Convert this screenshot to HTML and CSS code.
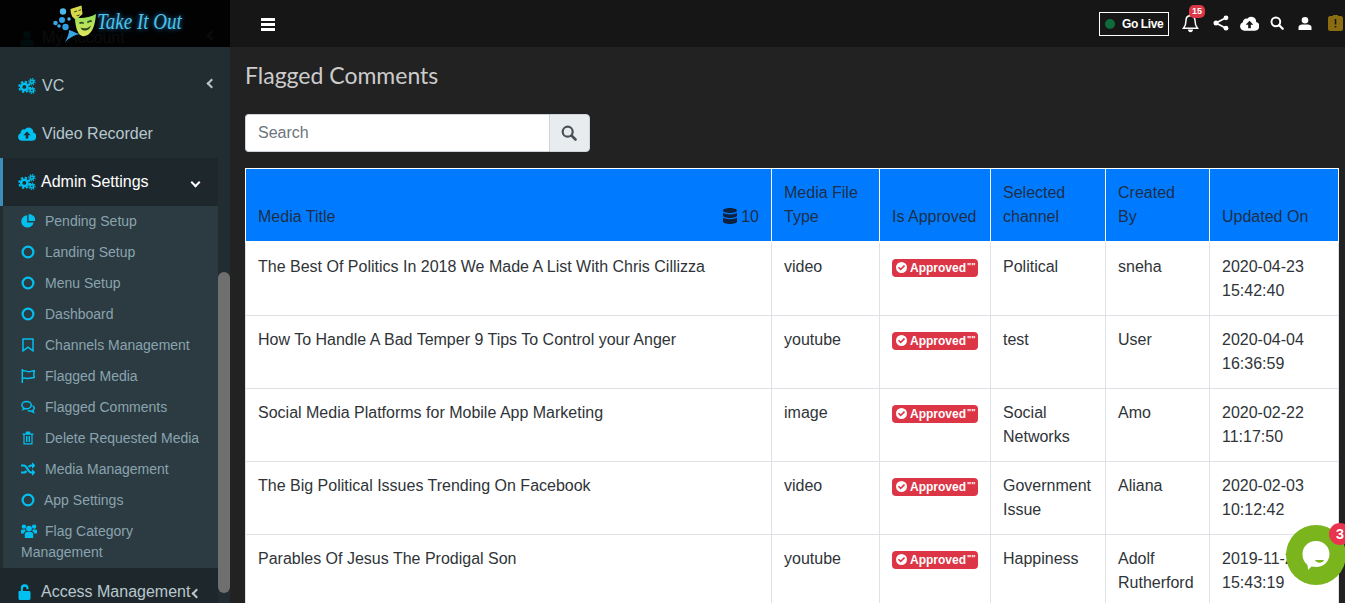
FILE: index.html
```html
<!DOCTYPE html>
<html lang="en">

<head>
    <meta charset="UTF-8">
    <meta name="viewport" content="width=device-width, initial-scale=1.0">
    <title>Flagged Comments</title>
    <link rel="stylesheet" href="styles.css">
</head>

<body>
    <!-- shared icons -->
    <svg class="icon-defs" width="0" height="0">
        <symbol id="i-cogs" viewBox="0 0 20 18">
            <circle cx="7" cy="10" r="3.6" fill="none" stroke="currentColor" stroke-width="2.8"/>
            <circle cx="7" cy="10" r="5.9" fill="none" stroke="currentColor" stroke-width="2" stroke-dasharray="2.6 2"/>
            <circle cx="15.5" cy="4.2" r="1.9" fill="none" stroke="currentColor" stroke-width="1.8"/>
            <circle cx="15.5" cy="4.2" r="3.5" fill="none" stroke="currentColor" stroke-width="1.3" stroke-dasharray="1.5 1.2"/>
            <circle cx="15.5" cy="13.8" r="1.9" fill="none" stroke="currentColor" stroke-width="1.8"/>
            <circle cx="15.5" cy="13.8" r="3.5" fill="none" stroke="currentColor" stroke-width="1.3" stroke-dasharray="1.5 1.2"/>
        </symbol>
        <symbol id="i-cloud" viewBox="0 0 20 15">
            <path fill="currentColor" fill-rule="evenodd" d="M4.5 15A4.5 4.5 0 0 1 3 6.3 3.6 3.6 0 0 1 7.6 2.5 5.2 5.2 0 0 1 17 5.8 4.7 4.7 0 0 1 15.5 15ZM10 4.6 6 8.8H8.6V12.6H11.4V8.8H14Z"/>
        </symbol>
        <symbol id="i-ring" viewBox="0 0 14 14">
            <circle cx="7" cy="7" r="5.4" fill="none" stroke="currentColor" stroke-width="2.2"/>
        </symbol>
        <symbol id="i-pie" viewBox="0 0 14 14">
            <path fill="currentColor" d="M6.2 1.2A6.2 6.2 0 1 0 12.6 8.4H6.2ZM7.6 0V7H14.6A7 7 0 0 0 7.6 0Z"/>
        </symbol>
        <symbol id="i-bookmark" viewBox="0 0 14 14">
            <path fill="none" stroke="currentColor" stroke-width="1.5" d="M2 1H12V12.8L7 9.2 2 12.8Z"/>
        </symbol>
        <symbol id="i-flag" viewBox="0 0 14 14">
            <path fill="none" stroke="currentColor" stroke-width="1.5" d="M1.3 0V14M1.3 2C4 .6 6 3.4 9 2.6 10.4 2.2 12 2 13.4 1.8 12.6 4.2 12.6 6.4 13.4 8.4 10 8.6 8 10 5 9.2 3.6 8.8 2.4 9 1.3 9.6"/>
        </symbol>
        <symbol id="i-comments" viewBox="0 0 15 14">
            <path fill="none" stroke="currentColor" stroke-width="1.6" d="M6 1.2C3 1.2 1 3 1 5 1 6.2 1.7 7.2 2.8 7.9L2.2 9.6 4.4 8.7C7.6 9.4 11 8 11 5 11 3 9 1.2 6 1.2Z"/>
            <path fill="none" stroke="currentColor" stroke-width="1.6" d="M12.4 5.5C13.6 6.2 14.2 7.2 14.2 8.2 14.2 9.2 13.6 10 12.8 10.6L13.4 12.6 11 11.3C9.8 11.5 8.4 11.3 7.4 10.6"/>
        </symbol>
        <symbol id="i-trash" viewBox="0 0 14 14">
            <path fill="currentColor" fill-rule="evenodd" d="M1.5 2.5H4.4L5.2 .6H8.8L9.6 2.5H12.5V3.8H11.6V13.4H2.4V3.8H1.5ZM3.6 3.8V12.2H10.4V3.8ZM5 5H6V11H5ZM6.6 5H7.4V11H6.6ZM8 5H9V11H8Z"/>
        </symbol>
        <symbol id="i-random" viewBox="0 0 14 14">
            <path fill="none" stroke="currentColor" stroke-width="2.2" d="M0 3.5H3C6 3.5 7 10.5 10 10.5H11.5M0 10.5H3C4 10.5 4.8 9.8 5.4 9M7.7 5C8.3 4.2 9 3.5 10 3.5H11.5"/>
            <path fill="currentColor" d="M11 .3 14.5 3.5 11 6.7ZM11 7.3 14.5 10.5 11 13.7Z"/>
        </symbol>
        <symbol id="i-users" viewBox="0 0 16 14">
            <circle cx="8" cy="4.6" r="2.9" fill="currentColor"/>
            <circle cx="2.9" cy="2.6" r="2.2" fill="currentColor"/>
            <circle cx="13.1" cy="2.6" r="2.2" fill="currentColor"/>
            <path fill="currentColor" d="M3.8 14V10.2C3.8 8.8 5 8 6 8H10C11 8 12.2 8.8 12.2 10.2V14ZM0 9.5V6.8C0 5.8.8 5.4 1.5 5.4H4C4.3 6 4.7 6.6 5.2 7 3.8 7.3 2.9 8.4 2.8 9.5ZM16 9.5V6.8C16 5.8 15.2 5.4 14.5 5.4H12C11.7 6 11.3 6.6 10.8 7 12.2 7.3 13.1 8.4 13.2 9.5Z"/>
        </symbol>
        <symbol id="i-unlock" viewBox="0 0 12 16">
            <path fill="currentColor" d="M1 7H2.4V4.5A3.8 3.8 0 0 1 10 3.7V5.2H8V4.5A1.8 1.8 0 0 0 4.4 4.5V7H10.5C11.2 7 12 7.6 12 8.3V14.500C12 15.3 11.2 16 10.5 16H1.5C.8 16 0 15.3 0 14.5V8C0 7.4.5 7 1 7Z"/>
        </symbol>
        <symbol id="i-search" viewBox="0 0 16 16">
            <circle cx="6.7" cy="6.7" r="5" fill="none" stroke="currentColor" stroke-width="2.2"/>
            <path stroke="currentColor" stroke-width="2.6" stroke-linecap="round" d="M10.5 10.5 14.5 14.5"/>
        </symbol>
        <symbol id="i-check" viewBox="0 0 12 12">
            <path fill="currentColor" fill-rule="evenodd" d="M6 0A6 6 0 1 1 6 12 6 6 0 0 1 6 0ZM5.1 9.3 9.9 4.5 8.7 3.3 5.1 6.9 3.3 5.1 2.1 6.3Z"/>
        </symbol>
    </svg>

    <div class="layout">
        <aside class="sidebar">
            <!-- logo sits over the scrolled menu -->
            <div class="logo">
                <svg class="logo-mark" viewBox="0 0 46 47" width="46" height="47">
                    <defs>
                        <linearGradient id="mask-fill" x1="0" y1="0" x2="0" y2="1">
                            <stop offset="0" stop-color="#8fe05a"/>
                            <stop offset="1" stop-color="#e3e65a"/>
                        </linearGradient>
                    </defs>
                    <circle cx="11" cy="11.5" r="3.2" fill="#4fb8ea"/>
                    <circle cx="3.5" cy="23" r="2.3" fill="#3aa6e4"/>
                    <circle cx="10" cy="20" r="3" fill="#2f9fe2"/>
                    <circle cx="7" cy="26" r="1.8" fill="#3aa6e4"/>
                    <circle cx="13.5" cy="27" r="3.2" fill="#2f9fe2"/>
                    <circle cx="17" cy="19" r="1.7" fill="#4fb8ea"/>
                    <path fill="#3aa6e4" d="M13 42C16 37 17 33 17 30L20 31C24 33 26 34 28 34 22 35 17 38 13 42Z"/>
                    <path fill="#d6d94a" d="M18.5 9 29.5 5.5 30.5 14 24 20 20.5 17C19 14.5 18.5 12 18.5 9Z"/>
                    <path fill="#4a4a1c" d="M22 11.5 25 10.5 25.2 11.5 22.2 12.5ZM26.5 10 29 9.2 29.2 10.2 26.7 11ZM24 15C25.5 15.5 27 15 28 14 27.5 16.5 25 17 24 15Z"/>
                    <path fill="url(#mask-fill)" d="M23 17.5C28 18.5 38 18 44 14 43.5 21 42 30 37 34 33 37 29 37 26.5 33 24 29 23 23 23 17.5Z"/>
                    <path fill="#2d4a22" d="M27 22.5C28.5 21.5 30.5 21.5 32 22.5L31.5 24C30.5 23.3 29 23.3 27.8 24ZM35 21.8C36.5 20.5 38.5 20 40 20.6L39.5 22.2C38.5 21.8 37 22.2 35.8 23.2ZM28.5 27.5C31.500 29 36 28.5 39 25.5 38 30.5 31 33 28.5 27.5Z"/>
                </svg>
                <span class="logo-text">Take It Out</span>
            </div>

            <ul class="menu">
                <li class="menu-item">
                    <svg class="menu-icon user-icon" viewBox="0 0 14 16"><circle cx="7" cy="4" r="4" fill="currentColor"/><path fill="currentColor" d="M0 16V12C0 10 2 9 4 9H10C12 9 14 10 14 12V16Z"/></svg>
                    <span class="menu-label">My Account</span>
                    <span class="chev chev-left"></span>
                </li>
                <li class="menu-item">
                    <svg class="menu-icon"><use href="#i-cogs"/></svg>
                    <span class="menu-label">VC</span>
                    <span class="chev chev-left"></span>
                </li>
                <li class="menu-item">
                    <svg class="menu-icon"><use href="#i-cloud"/></svg>
                    <span class="menu-label">Video Recorder</span>
                </li>
                <li class="menu-item active">
                    <svg class="menu-icon"><use href="#i-cogs"/></svg>
                    <span class="menu-label">Admin Settings</span>
                    <span class="chev chev-down"></span>
                </li>
                <li>
                    <ul class="submenu">
                        <li><svg class="sub-icon"><use href="#i-pie"/></svg>Pending Setup</li>
                        <li><svg class="sub-icon"><use href="#i-ring"/></svg>Landing Setup</li>
                        <li><svg class="sub-icon"><use href="#i-ring"/></svg>Menu Setup</li>
                        <li><svg class="sub-icon"><use href="#i-ring"/></svg>Dashboard</li>
                        <li><svg class="sub-icon"><use href="#i-bookmark"/></svg>Channels Management</li>
                        <li><svg class="sub-icon"><use href="#i-flag"/></svg>Flagged Media</li>
                        <li><svg class="sub-icon"><use href="#i-comments"/></svg>Flagged Comments</li>
                        <li><svg class="sub-icon"><use href="#i-trash"/></svg>Delete Requested Media</li>
                        <li><svg class="sub-icon"><use href="#i-random"/></svg>Media Management</li>
                        <li><svg class="sub-icon tight"><use href="#i-ring"/></svg>App Settings</li>
                        <li class="wrap"><svg class="sub-icon wide"><use href="#i-users"/></svg>Flag Category Management</li>
                    </ul>
                </li>
                <li class="menu-item darker">
                    <svg class="menu-icon lock-icon"><use href="#i-unlock"/></svg>
                    <span class="menu-label">Access Management</span>
                    <span class="chev chev-left tight-chev"></span>
                </li>
            </ul>
            <div class="scroll-thumb"></div>
        </aside>

        <div class="main">
            <header class="topbar">
                <div class="burger"><span></span><span></span><span></span></div>
                <div class="top-actions">
                    <div class="go-live"><span class="live-dot"></span>Go Live</div>
                    <div class="top-icon bell">
                        <svg width="17" height="19" viewBox="0 0 17 19"><path fill="none" stroke="currentColor" stroke-width="1.5" d="M8.5 1.8C5.5 1.8 4 4 4 6.5 4 10 3.4 12 1.5 14.3H15.5C13.6 12 13 10 13 6.5 13 4 11.5 1.8 8.5 1.8Z"/><path fill="currentColor" d="M6 15.5H11C11 19 6 19 6 15.5ZM7.5 0H9.5V2H7.5Z"/></svg>
                        <span class="bell-count">15</span>
                    </div>
                    <div class="top-icon">
                        <svg width="16" height="16" viewBox="0 0 16 16"><path fill="none" stroke="currentColor" stroke-width="1.8" d="M13 2.8 3 8 13 13.2"/><circle cx="13" cy="2.8" r="2.4" fill="currentColor"/><circle cx="3" cy="8" r="2.5" fill="currentColor"/><circle cx="13" cy="13.2" r="2.4" fill="currentColor"/></svg>
                    </div>
                    <div class="top-icon">
                        <svg width="19" height="15"><use href="#i-cloud"/></svg>
                    </div>
                    <div class="top-icon">
                        <svg width="14" height="14"><use href="#i-search"/></svg>
                    </div>
                    <div class="top-icon">
                        <svg width="14" height="13" viewBox="0 0 14 13"><circle cx="7" cy="3.3" r="3.3" fill="currentColor"/><path fill="currentColor" d="M.5 13V10.5C.5 8.5 2.5 7.6 4 7.6H10C11.5 7.6 13.5 8.5 13.5 10.5V13Z"/></svg>
                    </div>
                    <div class="top-icon license">
                        <svg width="15" height="16" viewBox="0 0 15 16"><path fill="#8a6d10" d="M2 1H5V0H10V1H13C14 1 15 2 15 3V14C15 15 14 16 13 16H2C1 16 0 15 0 14V3C0 2 1 1 2 1Z"/><path fill="#161616" d="M6.7 4H8.3V9.5H6.7ZM6.7 11H8.3V12.6H6.7Z"/></svg>
                    </div>
                </div>
            </header>

            <section class="content">
                <h1 class="page-title">Flagged Comments</h1>

                <div class="search-group">
                    <input class="search-input" type="text" placeholder="Search">
                    <button class="search-btn"><svg width="16" height="16"><use href="#i-search"/></svg></button>
                </div>

                <table class="data-table">
                    <colgroup>
                        <col class="c-title">
                        <col class="c-type">
                        <col class="c-approved">
                        <col class="c-channel">
                        <col class="c-by">
                        <col class="c-date">
                    </colgroup>
                    <thead>
                        <tr>
                            <th>
                                <div class="title-head">
                                    <span>Media Title</span>
                                    <span class="count">
                                        <svg width="14" height="16" viewBox="0 0 14 16"><path fill="currentColor" d="M7 0C11 0 14 1 14 2.5S11 5 7 5 0 4 0 2.5 3 0 7 0ZM0 4.700C1.5 6 4 6.4 7 6.4S12.5 6 14 4.7V7.5C14 9 11 10 7 10S0 9 0 7.5ZM0 9.6C1.5 10.9 4 11.3 7 11.3S12.5 10.9 14 9.6V13.5C14 15 11 16 7 16S0 15 0 13.5Z"/></svg>
                                        10
                                    </span>
                                </div>
                            </th>
                            <th>Media File Type</th>
                            <th>Is Approved</th>
                            <th>Selected channel</th>
                            <th>Created By</th>
                            <th>Updated On</th>
                        </tr>
                    </thead>
                    <tbody>
                        <tr>
                            <td>The Best Of Politics In 2018 We Made A List With Chris Cillizza</td>
                            <td>video</td>
                            <td><span class="badge"><svg width="11" height="11"><use href="#i-check"/></svg>Approved<i class="marks">""</i></span></td>
                            <td>Political</td>
                            <td>sneha</td>
                            <td>2020-04-23 15:42:40</td>
                        </tr>
                        <tr>
                            <td>How To Handle A Bad Temper 9 Tips To Control your Anger</td>
                            <td>youtube</td>
                            <td><span class="badge"><svg width="11" height="11"><use href="#i-check"/></svg>Approved<i class="marks">""</i></span></td>
                            <td>test</td>
                            <td>User</td>
                            <td>2020-04-04 16:36:59</td>
                        </tr>
                        <tr>
                            <td>Social Media Platforms for Mobile App Marketing</td>
                            <td>image</td>
                            <td><span class="badge"><svg width="11" height="11"><use href="#i-check"/></svg>Approved<i class="marks">""</i></span></td>
                            <td>Social Networks</td>
                            <td>Amo</td>
                            <td>2020-02-22 11:17:50</td>
                        </tr>
                        <tr>
                            <td>The Big Political Issues Trending On Facebook</td>
                            <td>video</td>
                            <td><span class="badge"><svg width="11" height="11"><use href="#i-check"/></svg>Approved<i class="marks">""</i></span></td>
                            <td>Government Issue</td>
                            <td>Aliana</td>
                            <td>2020-02-03 10:12:42</td>
                        </tr>
                        <tr>
                            <td>Parables Of Jesus The Prodigal Son</td>
                            <td>youtube</td>
                            <td><span class="badge"><svg width="11" height="11"><use href="#i-check"/></svg>Approved<i class="marks">""</i></span></td>
                            <td>Happiness</td>
                            <td>Adolf Rutherford</td>
                            <td>2019-11-20 15:43:19</td>
                        </tr>
                    </tbody>
                </table>
            </section>
        </div>
    </div>

    <!-- chat widget -->
    <div class="chat">
        <svg width="30" height="31" viewBox="0 0 30 31"><path fill="#fff" d="M15 1C23 1 28.5 7 28.5 14 28.5 21 23 27 15 27 13.5 27 12 26.8 10.5 26.5L7 30C7 27.5 6.8 25.5 6 24.5 3 22 1.5 18.5 1.5 14 1.5 7 7 1 15 1Z"/><path fill="#7ab51d" d="M14 20H23C22 23.5 15.5 23.5 14 20Z"/></svg>
        <span class="chat-count">3</span>
    </div>
</body>

</html>
```

FILE: styles.css
```css
html,
body,
ul,
li,
h1 {
    padding: 0;
    margin: 0;
}

ul {
    list-style: none;
}

html,
body {
    height: 603px;
    overflow: hidden;
}

body {
    background-color: #222;
    font-family: "Liberation Sans", Arial, sans-serif;
    font-size: 16px;
    line-height: 24px;
    color: #2f3438;
}

.icon-defs {
    position: absolute;
}

.layout {
    display: flex;
    height: 603px;
}

/* sidebar */

.sidebar {
    position: relative;
    flex: 0 0 230px;
    width: 230px;
    overflow: hidden;
    background-color: #222d32;
}

.logo {
    position: absolute;
    z-index: 10;
    top: 0;
    left: 0;
    width: 230px;
    height: 47px;
    background-color: rgba(0, 0, 0, .94);
    display: flex;
    align-items: flex-start;
    padding-left: 52px;
    box-sizing: border-box;
}

.logo-mark {
    flex: none;
}

.logo-text {
    display: inline-block;
    margin: 9px 0 0 -1px;
    font-family: "Liberation Serif", serif;
    font-style: italic;
    font-size: 19px;
    line-height: 24px;
    color: #4fc3ea;
    text-shadow: 0 0 5px rgba(40, 160, 230, .9);
    white-space: nowrap;
    transform: scaleY(1.25);
}

.menu {
    width: 218px;
    padding-top: 14px;
}

.menu-item {
    display: flex;
    align-items: center;
    height: 48px;
    padding-left: 18px;
    padding-right: 4px;
    color: #b8c7ce;
}

.menu-item.active {
    padding-left: 15px;
    padding-right: 16px;
    border-left: 3px solid #3c8dbc;
    background-color: #1e282c;
    color: #fff;
}

.menu-item.active .menu-label {
    margin-left: 5px;
}

.menu-item.darker {
    background-color: #1e282c;
    padding-right: 12px;
}

.menu-icon {
    flex: none;
    width: 18px;
    height: 16px;
    color: #00c0ef;
}

.user-icon {
    height: 15px;
}

.lock-icon {
    width: 13px;
    height: 16px;
    margin-right: 4px;
}

.menu-label {
    flex: 1;
    margin-left: 6px;
    white-space: nowrap;
}

.chev {
    flex: none;
    width: 7px;
    height: 7px;
    border-left: 2px solid #b8c7ce;
    border-bottom: 2px solid #b8c7ce;
    box-sizing: border-box;
}

.chev-left {
    transform: rotate(45deg);
    margin-right: -1px;
    margin-top: -5px;
}

.tight-chev {
    margin-right: 6px;
    margin-top: 3px;
}

.chev-down {
    transform: rotate(-45deg);
    margin-right: 3px;
    border-color: #fff;
}

.submenu {
    margin-left: 3px;
    padding-bottom: 5px;
    background-color: #2c3b41;
}

.submenu li {
    height: 31px;
    line-height: 31px;
    padding-left: 18px;
    font-size: 14px;
    color: #8aa4af;
    white-space: nowrap;
}

.submenu li.wrap {
    height: auto;
    line-height: 21px;
    padding-top: 5px;
    width: 150px;
    white-space: normal;
}

.sub-icon {
    width: 14px;
    height: 14px;
    margin-right: 10px;
    vertical-align: -2px;
    color: #00c0ef;
}

.sub-icon.tight {
    margin-right: 9px;
}

.sub-icon.wide {
    width: 16px;
    margin-right: 8px;
}

.scroll-thumb {
    position: absolute;
    left: 218px;
    top: 272px;
    width: 12px;
    height: 321px;
    border-radius: 6px;
    background-color: #6f6f6f;
}

/* main area */

.main {
    flex: 1;
    min-width: 0;
}

.topbar {
    display: flex;
    align-items: center;
    justify-content: space-between;
    height: 47px;
    background-color: #161616;
    padding-left: 31px;
    box-sizing: border-box;
}

.burger {
    margin-top: 3px;
}

.burger span {
    display: block;
    width: 14px;
    height: 3px;
    margin-bottom: 2px;
    background-color: #fff;
}

.top-actions {
    display: flex;
    align-items: center;
    padding-top: 1px;
}

.go-live {
    display: flex;
    align-items: center;
    width: 70px;
    height: 24px;
    box-sizing: border-box;
    border: 1px solid #fff;
    padding-left: 5px;
    margin-right: 12px;
    font-size: 12px;
    font-weight: bold;
    letter-spacing: -.4px;
    color: #fff;
}

.live-dot {
    width: 10px;
    height: 10px;
    border-radius: 50%;
    margin-right: 7px;
    background-color: #0f6b3c;
}

.top-icon {
    display: flex;
    justify-content: center;
    align-items: center;
    width: 28px;
    height: 24px;
    margin-top: -2px;
    color: #fff;
}

.bell {
    position: relative;
    width: 18px;
    margin-right: 8px;
}

.bell-count {
    position: absolute;
    top: -6px;
    left: 8px;
    padding: 0 3px;
    height: 13px;
    line-height: 13px;
    border-radius: 5px;
    background-color: #dc3545;
    font-size: 9px;
    font-weight: bold;
    color: #fff;
}

.license {
    width: 20px;
    margin-left: 6px;
}

.content {
    padding: 15px 6px 0 15px;
}

.page-title {
    font-family: "Lato", "Noto Sans", sans-serif;
    font-size: 23px;
    line-height: 29px;
    font-weight: 400;
    color: #ccc;
    margin-top: -1px;
    margin-bottom: 24px;
}

.search-group {
    display: flex;
    width: 345px;
    height: 38px;
    margin-bottom: 16px;
}

.search-input {
    flex: 1;
    min-width: 0;
    padding: 0 12px;
    border: 1px solid #ced4da;
    border-right: 0;
    border-radius: 4px 0 0 4px;
    font-family: inherit;
    font-size: 16px;
    outline: none;
}

.search-input::placeholder {
    color: #6c757d;
}

.search-btn {
    width: 41px;
    padding: 0 2px 0 0;
    border: 1px solid #ced4da;
    border-radius: 0 4px 4px 0;
    background-color: #e9ecef;
    color: #495057;
}

.search-btn svg {
    display: block;
    margin: 0 auto;
}

.data-table {
    width: 1093px;
    table-layout: fixed;
    border-collapse: collapse;
    background-color: #fff;
}

.c-title { width: 526px; }
.c-type { width: 108px; }
.c-approved { width: 111px; }
.c-channel { width: 115px; }
.c-by { width: 104px; }
.c-date { width: 129px; }

.data-table th,
.data-table td {
    padding: 12px;
    text-align: left;
    vertical-align: top;
    border: 1px solid #dee2e6;
}

.data-table th {
    vertical-align: bottom;
    font-weight: 400;
    color: #1d2f4a;
    background-color: #007bff;
    border-color: #fff;
    border-bottom-width: 0;
}

.data-table tbody tr:first-child td {
    border-top-width: 2px;
    border-top-color: #fff;
}

.title-head {
    display: flex;
    justify-content: space-between;
}

.count svg {
    vertical-align: -2px;
    color: #0f2140;
}

.badge {
    display: inline-flex;
    align-items: center;
    width: 86px;
    height: 18px;
    box-sizing: border-box;
    padding-left: 4px;
    vertical-align: -1px;
    border-radius: 4px;
    background-color: #dc3545;
    font-size: 12px;
    font-weight: bold;
    color: #fff;
}

.badge svg {
    margin-right: 3px;
}

.marks {
    font-size: 9px;
    font-style: normal;
    line-height: 8px;
    margin: -4px 0 0 1px;
}

/* chat widget */

.chat {
    position: fixed;
    left: 1286px;
    top: 525px;
    width: 60px;
    height: 60px;
    border-radius: 50%;
    background-color: #7ab51d;
    display: flex;
    align-items: center;
    justify-content: center;
}

.chat-count {
    position: absolute;
    top: -2px;
    left: 43px;
    width: 22px;
    height: 22px;
    line-height: 22px;
    border-radius: 50%;
    text-align: center;
    background-color: #e9334f;
    font-size: 15px;
    font-weight: bold;
    color: #fff;
}
```
